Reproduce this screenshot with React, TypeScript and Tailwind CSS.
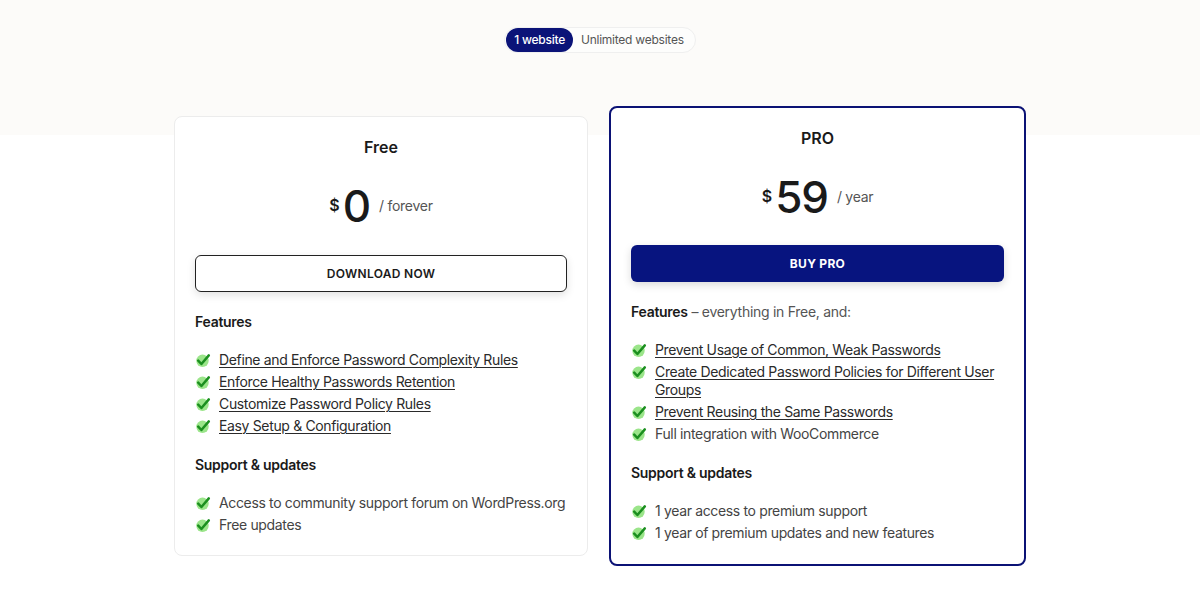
import React from "react"

const Check = () => (
    <svg viewBox="0 0 16 16" className="w-4 h-4 shrink-0 mt-[1px]">
        <circle cx="7.5" cy="8.8" r="6.2" fill="#9be58a" />
        <path d="M3.2 8.6 L6.4 12 L13.8 3.4" fill="none" stroke="#1b8f1f" strokeWidth="2.5" strokeLinecap="round" strokeLinejoin="round" />
    </svg>
)

type Item = { text: string; link?: boolean }

const List = ({ items }: { items: Item[] }) => (
    <ul className="flex flex-col gap-1 text-sm leading-[18px] tracking-[-0.025em] text-[#444]">
        {items.map((it) => (
            <li key={it.text} className="flex items-start gap-[8px]">
                <Check />
                <span className={it.link ? "underline underline-offset-2 decoration-1 text-[#2a2a2a]" : ""}>{it.text}</span>
            </li>
        ))}
    </ul>
)

const Price = ({ amount, period }: { amount: string; period: string }) => (
    <div className="flex items-center justify-center h-12 mt-[23px]">
        <span className="text-base font-semibold text-[#1a1a1a] self-start mt-[11px] mr-[3px]">$</span>
        <span className="text-[44px] leading-[48px] font-medium text-[#1a1a1a] tracking-tight">{amount}</span>
        <span className="text-sm text-[#555] ml-[9px] tracking-[-0.02em]">/ {period}</span>
    </div>
)

export default function App() {
    const freeFeatures: Item[] = [
        { text: "Define and Enforce Password Complexity Rules", link: true },
        { text: "Enforce Healthy Passwords Retention", link: true },
        { text: "Customize Password Policy Rules", link: true },
        { text: "Easy Setup & Configuration", link: true },
    ]
    const proFeatures: Item[] = [
        { text: "Prevent Usage of Common, Weak Passwords", link: true },
        { text: "Create Dedicated Password Policies for Different User Groups", link: true },
        { text: "Prevent Reusing the Same Passwords", link: true },
        { text: "Full integration with WooCommerce" },
    ]

    return (
        <div className="min-h-[590px] bg-[linear-gradient(#fcfbf9_135px,#ffffff_135px)] font-['Inter','Noto_Sans',sans-serif] text-[#1a1a1a] pt-[27px]">
            {/* plan toggle */}
            <div className="flex justify-center">
                <div className="flex items-center h-[26px] px-px rounded-full border border-[#efefef] bg-[#fdfdfc] text-xs tracking-[-0.02em]">
                    <span className="h-6 px-[8px] flex items-center rounded-full bg-[#0b1378] text-white font-medium">1 website</span>
                    <span className="pl-[8px] pr-[10px] text-[#555]">Unlimited websites</span>
                </div>
            </div>

            <div className="flex items-center justify-center gap-[21px] mt-[53px]">
                {/* Free */}
                <div className="w-[414px] bg-white border border-[#ececec] rounded-lg px-5 pt-[18px] pb-[21px]">
                    <h2 className="text-base leading-6 font-semibold text-center">Free</h2>
                    <Price amount="0" period="forever" />
                    <button className="mt-[25px] w-full h-[37px] rounded-md border border-[#222] bg-white text-xs font-semibold tracking-wide shadow-[0_3px_8px_rgba(0,0,0,0.12)]">
                        DOWNLOAD NOW
                    </button>
                    <h3 className="mt-5 text-sm leading-5 font-semibold tracking-[-0.02em]">Features</h3>
                    <div className="mt-[19px]"><List items={freeFeatures} /></div>
                    <h3 className="mt-5 text-sm leading-5 font-semibold tracking-[-0.02em]">Support &amp; updates</h3>
                    <div className="mt-[19px]">
                        <List items={[{ text: "Access to community support forum on WordPress.org" }, { text: "Free updates" }]} />
                    </div>
                </div>

                {/* Pro */}
                <div className="w-[417px] bg-white border-2 border-[#0b1275] rounded-lg px-5 pt-[18px] pb-[22px]">
                    <h2 className="text-base leading-6 font-semibold text-center">PRO</h2>
                    <Price amount="59" period="year" />
                    <button className="mt-6 w-full h-[37px] rounded-md bg-[#07147f] text-white text-xs font-bold tracking-wide shadow-[0_3px_8px_rgba(0,0,0,0.15)]">
                        BUY PRO
                    </button>
                    <h3 className="mt-5 text-sm leading-5 tracking-[-0.02em]">
                        <span className="font-semibold">Features</span> <span className="text-[#555]">– everything in Free, and:</span>
                    </h3>
                    <div className="mt-[19px]"><List items={proFeatures} /></div>
                    <h3 className="mt-5 text-sm leading-5 font-semibold tracking-[-0.02em]">Support &amp; updates</h3>
                    <div className="mt-[19px]">
                        <List items={[{ text: "1 year access to premium support" }, { text: "1 year of premium updates and new features" }]} />
                    </div>
                </div>
            </div>
        </div>
    )
}
